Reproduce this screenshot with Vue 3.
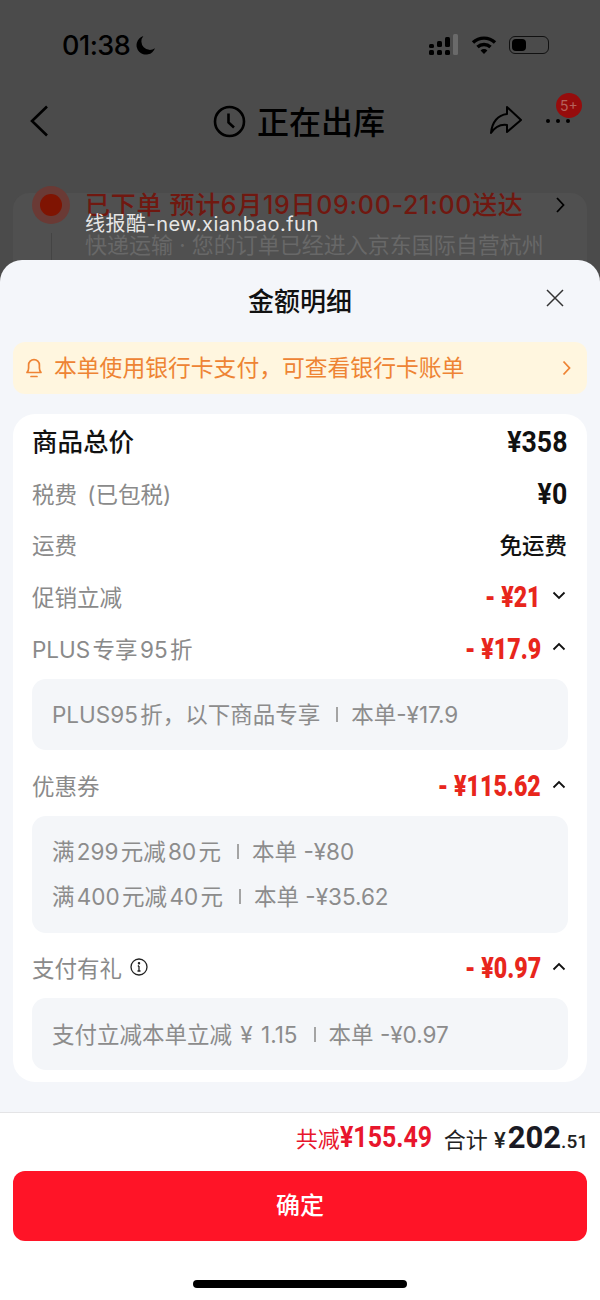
<script setup>
const plainRows = [
  { label: '税费 (已包税)', value: '¥0', big: true, wide: true },
  { label: '运费', value: '免运费' },
]

const discounts = [
  { label: '促销立减', value: '- ¥21', open: false, lines: [] },
  {
    label: 'PLUS 专享 95 折',
    value: '- ¥17.9',
    open: true,
    lines: [{ text: 'PLUS95 折，以下商品专享', tail: '本单-¥17.9' }],
  },
  {
    label: '优惠券',
    value: '- ¥115.62',
    open: true,
    lines: [
      { text: '满 299 元减 80 元', tail: '本单 -¥80' },
      { text: '满 400 元减 40 元', tail: '本单 -¥35.62' },
    ],
  },
  {
    label: '支付有礼',
    value: '- ¥0.97',
    open: true,
    info: true,
    lines: [{ text: '支付立减本单立减 ¥ 1.15', tail: '本单 -¥0.97', wide: true }],
  },
]
</script>

<template>
  <div class="page">
    <!-- 蒙层下面的订单页 -->
    <div class="behind">
      <div class="status">
        <div class="status-left">
          <span class="time">01:38</span>
          <svg width="21" height="21" viewBox="0 0 20 20"><path d="M8 1a9 9 0 1 0 11 11.5A8 8 0 0 1 8 1z" fill="#000" /></svg>
        </div>
        <div class="status-right">
          <svg width="30" height="22" viewBox="0 0 30 22">
            <g fill="#000">
              <rect x="0" y="10" width="5" height="4" rx="1.5" /><rect x="0" y="16" width="5" height="5" rx="1.5" />
              <rect x="8" y="7" width="5" height="6" rx="1.5" /><rect x="8" y="16" width="5" height="5" rx="1.5" />
              <rect x="16" y="3" width="5" height="10" rx="1.5" /><rect x="16" y="16" width="5" height="5" rx="1.5" />
            </g>
            <rect x="24" y="0" width="5" height="21" rx="1.5" fill="#6a6a6a" />
          </svg>
          <svg width="26" height="20" viewBox="0 0 26 20" fill="none" stroke="#000" stroke-width="3.4">
            <path d="M2 7.5a16 16 0 0 1 22 0" /><path d="M6.5 12a9.5 9.5 0 0 1 13 0" />
            <path d="M13 19l-3.4-3.6a4.8 4.8 0 0 1 6.8 0z" fill="#000" stroke="none" />
          </svg>
          <div class="battery"><span></span></div>
        </div>
      </div>

      <div class="nav">
        <svg class="back" width="20" height="32" viewBox="0 0 20 32" fill="none" stroke="#000" stroke-width="2.6"><path d="M18 1.5L3 16l15 14.5" /></svg>
        <div class="nav-title">
          <svg width="33" height="33" viewBox="0 0 33 33" fill="none" stroke="#000" stroke-width="2.6">
            <circle cx="16.5" cy="16.5" r="14.5" /><path d="M15.5 8.5v9l5.5 5" />
          </svg>
          <span>正在出库</span>
        </div>
        <svg class="share" width="34" height="30" viewBox="0 0 34 30" fill="none" stroke="#000" stroke-width="2"><path d="M18 2l14 13-14 12v-7C11 19 6 22 2 28 3 17 9 10 18 9z" stroke-linejoin="round" /></svg>
        <div class="more">
          <i></i><i></i><i></i>
          <b class="badge">5+</b>
        </div>
      </div>

      <div class="order-card">
        <div class="order-dot"><span></span></div>
        <div class="order-line"></div>
        <div class="order-text">
          <div class="order-head">已下单 预计6月19日09:00-21:00送达</div>
          <div class="order-sub">快递运输 · 您的订单已经进入京东国际自营杭州</div>
        </div>
        <svg class="order-arrow" width="9" height="16" viewBox="0 0 9 16" fill="none" stroke="#000" stroke-width="1.8"><path d="M1 1l6.5 7L1 15" /></svg>
      </div>
    </div>

    <div class="watermark">线报酷-new.xianbao.fun</div>

    <!-- 金额明细弹层 -->
    <div class="sheet">
      <div class="sheet-head">
        <span>金额明细</span>
        <svg class="close" width="18" height="18" viewBox="0 0 18 18" fill="none" stroke="#333" stroke-width="1.5"><path d="M1 1l16 16M17 1L1 17" /></svg>
      </div>

      <div class="notice">
        <svg width="18" height="22" viewBox="0 0 18 22" fill="none" stroke="#ee8434" stroke-width="1.7">
          <path d="M2 15.5c1.4-1.2 1.6-2.6 1.6-4.5V8a5.4 5.4 0 0 1 10.8 0v3c0 1.9.2 3.3 1.6 4.5z" stroke-linejoin="round" />
          <path d="M6 19.5h6" stroke-linecap="round" />
        </svg>
        <span class="notice-text">本单使用银行卡支付，可查看银行卡账单</span>
        <svg width="9" height="16" viewBox="0 0 9 16" fill="none" stroke="#ee8434" stroke-width="1.8"><path d="M1.5 1.5L7.5 8l-6 6.5" /></svg>
      </div>

      <div class="detail">
        <div class="row">
          <span class="total-label">商品总价</span>
          <span class="total-value">¥358</span>
        </div>
        <div v-for="r in plainRows" :key="r.label" class="row">
          <span class="row-label" :class="{ wide: r.wide }">{{ r.label }}</span>
          <span class="plain-value" :class="{ big: r.big }">{{ r.value }}</span>
        </div>
        <template v-for="d in discounts" :key="d.label">
          <div class="row">
            <span class="row-label">
              {{ d.label }}
              <svg v-if="d.info" class="info" width="18" height="18" viewBox="0 0 18 18" fill="none" stroke="#222" stroke-width="1.3">
                <circle cx="9" cy="9" r="8" /><path d="M9 8v5M7.5 13h3M7.8 8H9" /><circle cx="9" cy="5.2" r=".6" fill="#222" />
              </svg>
            </span>
            <span class="discount">
              <span class="discount-value">{{ d.value }}</span>
              <svg width="14" height="9" viewBox="0 0 14 9" fill="none" stroke="#111" stroke-width="1.8" :class="{ up: d.open }"><path d="M1.5 1.5L7 7l5.500-5.500" /></svg>
            </span>
          </div>
          <div v-if="d.lines.length" class="sub-box">
            <div v-for="line in d.lines" :key="line.text" class="sub-line">
              <span class="sub-text" :class="{ wide: line.wide }">{{ line.text }}</span>
              <i class="bar"></i>
              <span>{{ line.tail }}</span>
            </div>
          </div>
        </template>
      </div>

      <div class="footer">
        <div class="sum">
          <span class="sum-red">共减<b>¥155.49</b></span>
          <span class="sum-total">合计 <em>¥</em><b>202</b><small>.51</small></span>
        </div>
        <button type="button" class="confirm"><span>确定</span></button>
        <div class="home-bar"></div>
      </div>
    </div>
  </div>
</template>

<style>
html,
body {
  margin: 0;
  background: #fff;
}
</style>

<style scoped>
.page {
  position: relative;
  width: 600px;
  height: 1300px;
  overflow: hidden;
  background: #4b4b4b;
  font-family: Inter, 'Noto Sans CJK SC', sans-serif;
}

.behind {
  height: 280px;
  margin-bottom: -20px;
  overflow: hidden;
}
.status {
  height: 90px;
  padding: 0 51px 0 62px;
  display: flex;
  align-items: center;
  justify-content: space-between;
}
.status-left {
  display: flex;
  align-items: center;
  gap: 5px;
  color: #000;
}
.time {
  font-size: 27px;
  font-weight: 500;
  letter-spacing: -0.5px;
}
.status-right {
  display: flex;
  align-items: center;
  gap: 12px;
}
.battery {
  width: 40px;
  height: 18px;
  border: 1px solid #111;
  border-radius: 6px;
  padding: 2px;
  box-sizing: border-box;
}
.battery span {
  display: block;
  width: 14px;
  height: 100%;
  background: #000;
  border-radius: 4px;
}

.nav {
  position: relative;
  height: 62px;
  display: flex;
  align-items: center;
  justify-content: center;
}
.back {
  position: absolute;
  left: 29px;
  top: 15px;
}
.nav-title {
  display: flex;
  align-items: center;
  gap: 11px;
  font-size: 32px;
  font-weight: 500;
  color: #000;
}
.nav-title span {
  margin-top: -3px;
  margin-right: 2px;
}
.share {
  position: absolute;
  left: 489px;
  top: 15px;
}
.more {
  position: absolute;
  left: 546px;
  top: 29px;
  display: flex;
  gap: 6px;
}
.more i {
  width: 4px;
  height: 4px;
  border-radius: 50%;
  background: #000;
}
.badge {
  position: absolute;
  left: 10px;
  top: -26px;
  width: 26px;
  height: 25px;
  border-radius: 50%;
  background: #960c0c;
  color: #b5625c;
  font-size: 14px;
  font-weight: 400;
  line-height: 25px;
  text-align: center;
}

.order-card {
  position: relative;
  margin: 41px 13px 0;
  height: 120px;
  padding: 0 19px;
  display: flex;
  gap: 15px;
  background: #505050;
  border-radius: 16px;
}
.order-dot {
  flex: none;
  width: 38px;
  height: 38px;
  margin-top: -7px;
  display: flex;
  align-items: center;
  justify-content: center;
  border-radius: 50%;
  background: #6a3a35;
}
.order-dot span {
  width: 22px;
  height: 22px;
  border-radius: 50%;
  background: #7f1402;
}
.order-line {
  position: absolute;
  left: 38px;
  top: 40px;
  width: 1px;
  height: 40px;
  background: #444;
}
.order-text {
  padding-top: 2px;
  white-space: nowrap;
}
.order-head {
  font-size: 25px;
  font-weight: 500;
  line-height: 20px;
  letter-spacing: .7px;
  color: #701810;
}
.order-sub {
  margin-top: 19px;
  font-size: 22px;
  line-height: 22px;
  color: #686868;
}
.order-arrow {
  position: absolute;
  left: 543px;
  top: 4px;
}

.watermark {
  position: absolute;
  left: 85px;
  top: 215px;
  z-index: 2;
  font-size: 20px;
  line-height: 18px;
  letter-spacing: .5px;
  color: #e6e6e6;
}

.sheet {
  position: relative;
  height: 1040px;
  background: #f4f6fa;
  border-radius: 22px 22px 0 0;
}
.sheet-head {
  position: relative;
  height: 82px;
  display: flex;
  align-items: center;
  justify-content: center;
  font-size: 26px;
  font-weight: 500;
  color: #111;
}
.sheet-head span {
  margin-top: -3px;
}
.close {
  position: absolute;
  left: 546px;
  top: 29px;
}

.notice {
  margin: 0 13px;
  height: 52px;
  padding: 0 16px 0 12px;
  display: flex;
  align-items: center;
  background: #fff6df;
  border-radius: 12px;
  color: #ee8434;
}
.notice-text {
  flex: 1;
  margin: -3px 0 0 11px;
  font-size: 22.8px;
}

.detail {
  margin: 20px 13px 0;
  padding: 2px 19px 2.25px;
  background: #fff;
  border-radius: 22px;
}
.row {
  height: 51.75px;
  display: flex;
  align-items: center;
  justify-content: space-between;
}
.total-label {
  padding-bottom: 4px;
  font-size: 25.5px;
  font-weight: 500;
  color: #111;
}
.total-value {
  margin-right: 1px;
  font-family: Roboto, 'Noto Sans CJK SC', sans-serif;
  font-size: 29px;
  font-weight: 700;
  color: #111;
  transform: scaleX(.92);
  transform-origin: right center;
}
.row-label {
  display: flex;
  align-items: center;
  gap: 8px;
  padding-bottom: 2px;
  font-size: 22.5px;
  color: #8a8a8a;
  word-spacing: -4px;
}
.row-label.wide {
  word-spacing: 4px;
}
.plain-value {
  margin-right: 1px;
  padding-bottom: 2px;
  font-size: 22.5px;
  font-weight: 500;
  color: #111;
}
.plain-value.big {
  padding-bottom: 0;
  font-family: Roboto, 'Noto Sans CJK SC', sans-serif;
  font-size: 29px;
  font-weight: 700;
  transform: scaleX(.92);
  transform-origin: right center;
}
.discount {
  display: flex;
  align-items: center;
  gap: 11px;
}
.discount svg {
  margin-top: -4px;
  margin-right: 2px;
}
.discount svg.up {
  transform: rotate(180deg);
}
.discount-value {
  font-family: Roboto, 'Noto Sans CJK SC', sans-serif;
  font-size: 29px;
  font-weight: 900;
  color: #e8261c;
  transform: scaleX(.8);
  transform-origin: right center;
}

.sub-box {
  margin: 4px 0 10px;
  padding: 13.25px 20px;
  background: #f4f6f9;
  border-radius: 14px;
}
.sub-line {
  display: flex;
  align-items: center;
  height: 45px;
  padding-bottom: 3px;
  box-sizing: border-box;
  font-size: 22.5px;
  color: #8c8c8c;
  white-space: nowrap;
}
.sub-text {
  word-spacing: -4px;
}
.sub-text.wide {
  word-spacing: 2px;
}
.bar {
  width: 2px;
  height: 15px;
  margin: 3px 13px 0 16px;
  background: #a4a4a4;
}

.footer {
  margin-top: 30px;
  padding: 0 13px;
  height: 187px;
  background: #fff;
  border-top: 1px solid #e4e4e6;
}
.sum {
  height: 48px;
  margin: 0 -1px 10px 0;
  display: flex;
  align-items: center;
  justify-content: flex-end;
  gap: 12px;
  font-size: 22px;
  white-space: nowrap;
}
.sum-red {
  color: #e8162c;
}
.sum-red b {
  display: inline-block;
  margin-left: -15px;
  font-family: Roboto, sans-serif;
  font-size: 29px;
  font-weight: 700;
  transform: scaleX(.86);
  transform-origin: right center;
}
.sum-total {
  color: #222;
}
.sum-total em {
  font-family: Roboto, sans-serif;
  font-style: normal;
  font-weight: 500;
}
.sum-total b {
  margin-left: 2px;
  font-family: Roboto, sans-serif;
  font-size: 31px;
  font-weight: 700;
  color: #1a1a24;
}
.sum-total small {
  font-family: Roboto, sans-serif;
  font-size: 19px;
  font-weight: 500;
}

.confirm {
  display: block;
  width: 100%;
  height: 70px;
  border: 0;
  border-radius: 12px;
  background: #ff1427;
  color: #fff;
  font-family: inherit;
  font-size: 24px;
  font-weight: 500;
}
.confirm span {
  position: relative;
  top: -3px;
}
.home-bar {
  width: 214px;
  height: 8px;
  margin: 39px auto 0;
  border-radius: 4px;
  background: #000;
}
</style>
